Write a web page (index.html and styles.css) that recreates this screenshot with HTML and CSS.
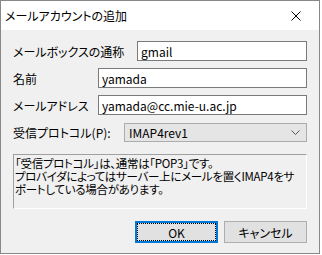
FILE: index.html
```html
<!DOCTYPE html>
<html lang="ja">
<head>
    <meta charset="UTF-8">
    <title>メールアカウントの追加</title>
    <link rel="stylesheet" href="styles.css">
</head>
<body>
    <div class="window">
        <header class="titlebar">
            <span class="title">メールアカウントの追加</span>
            <button class="close" aria-label="閉じる">
                <svg width="10" height="10" viewBox="0 0 10 10">
                    <path d="M0.5 0.5 L9.5 9.5 M9.5 0.5 L0.5 9.5" stroke="#000" stroke-width="1" fill="none"/>
                </svg>
            </button>
        </header>

        <main class="content">
            <div class="row">
                <label class="label label-wide">メールボックスの通称</label>
                <input class="field" value="gmail">
            </div>
            <div class="row">
                <label class="label label-short">名前</label>
                <input class="field" value="yamada">
            </div>
            <div class="row">
                <label class="label label-short">メールアドレス</label>
                <input class="field" value="yamada@cc.mie-u.ac.jp">
            </div>
            <div class="row">
                <label class="label label-mid">受信プロトコル(P):</label>
                <div class="combo">
                    <span>IMAP4rev1</span>
                    <svg width="9" height="5" viewBox="0 0 9 5">
                        <path d="M0.5 0.5 L4.5 4.5 L8.5 0.5" stroke="#555" stroke-width="1" fill="none"/>
                    </svg>
                </div>
            </div>

            <p class="note">「受信プロトコル」は、通常は「POP3」です。<br>プロバイダによってはサーバー上にメールを置くIMAP4をサ<br>ポートしている場合があります。</p>

            <div class="buttons">
                <button class="btn btn-default"><span>OK</span></button>
                <button class="btn">キャンセル</button>
            </div>
        </main>
    </div>
</body>
</html>
```

FILE: styles.css
```css
body {
    margin: 0;
    background: #fff;
    font-family: "Noto Sans CJK JP", "Noto Sans", sans-serif;
    font-size: 12px;
    color: #000;
    font-feature-settings: "palt";
}

.window {
    width: 318px;
    height: 252px;
    border: 1px solid #888;
    display: flex;
    flex-direction: column;
}

.titlebar {
    height: 29px;
    background: #fff;
    display: flex;
    align-items: center;
    justify-content: space-between;
    padding-left: 4px;
}

.title {
    font-size: 12px;
}

.close {
    border: none;
    background: none;
    padding: 0;
    width: 30px;
    height: 29px;
    margin-right: 8px;
    display: flex;
    align-items: center;
    justify-content: center;
}

.content {
    flex: 1;
    background: #f0f0f0;
    padding: 11px 12px 0 12px;
    display: flex;
    flex-direction: column;
}

.row {
    display: flex;
    align-items: center;
    height: 20px;
    margin-bottom: 7px;
}

.label {
    flex-shrink: 0;
}

.label-wide {
    width: 124px;
}

.label-short {
    width: 85px;
}

.label-mid {
    width: 111px;
}

.field {
    flex: 1;
    min-width: 0;
    height: 20px;
    box-sizing: border-box;
    border: 1px solid #7a7a7a;
    background: #fff;
    padding: 0 3px;
    font: inherit;
    font-feature-settings: "palt";
    outline: none;
}

.combo {
    flex: 1;
    height: 19px;
    box-sizing: border-box;
    border: 1px solid #acacac;
    background: #e5e5e5;
    display: flex;
    align-items: center;
    justify-content: space-between;
    padding: 0 6px 0 4px;
}

.note {
    margin: 5px 0 0;
    height: 51px;
    border-top: 1px solid #a0a0a0;
    border-left: 1px solid #a0a0a0;
    border-right: 1px solid #fff;
    border-bottom: 1px solid #fff;
    padding: 2px 1px 0;
    font-size: 11.5px;
    letter-spacing: -0.3px;
    line-height: 13px;
    white-space: nowrap;
}

.buttons {
    display: flex;
    justify-content: flex-end;
    gap: 6px;
    margin-top: 12px;
}

.btn {
    width: 83px;
    height: 22px;
    box-sizing: border-box;
    border: 1px solid #adadad;
    background: #e1e1e1;
    font: inherit;
    font-feature-settings: "palt";
    padding: 0;
    display: flex;
    align-items: center;
    justify-content: center;
}

.btn-default {
    border: 2px solid #0078d7;
    padding: 1px;
}

.btn-default span {
    flex: 1;
    align-self: stretch;
    display: flex;
    align-items: center;
    justify-content: center;
    outline: 1px dotted #000;
}
```
